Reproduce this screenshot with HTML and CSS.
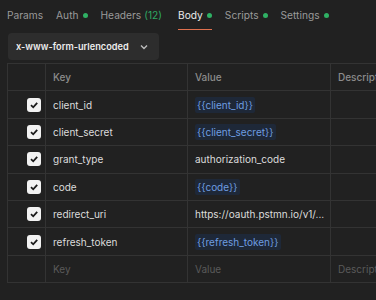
FILE: index.html
```html
<!DOCTYPE html>
<html lang="en">
<head>
  <meta charset="UTF-8">
  <meta name="viewport" content="width=device-width, initial-scale=1.0">
  <title>Body</title>
  <link rel="stylesheet" href="styles.css">
</head>
<body>
  <div class="tabs">
    <div class="tab">Params</div>
    <div class="tab">Auth <span class="dot"></span></div>
    <div class="tab">Headers <span class="count">(12)</span></div>
    <div class="tab active">Body <span class="dot"></span></div>
    <div class="tab">Scripts <span class="dot"></span></div>
    <div class="tab">Settings <span class="dot"></span></div>
  </div>

  <div class="body-type">
    <div class="select">
      x-www-form-urlencoded
      <svg width="10" height="10" viewBox="0 0 10 10"><path d="M2 3.5 L5 6.5 L8 3.5" fill="none" stroke="#bdbdbd" stroke-width="1.4"/></svg>
    </div>
  </div>

  <div class="params">
    <div class="row head">
      <div class="cell check"></div>
      <div class="cell key">Key</div>
      <div class="cell value">Value</div>
      <div class="cell desc">Descript</div>
    </div>
    <div class="row">
      <div class="cell check"><span class="box"><svg width="10" height="10" viewBox="0 0 10 10"><path d="M2 5.2 L4.2 7.3 L8.2 2.8" fill="none" stroke="#1a1a1a" stroke-width="1.8"/></svg></span></div>
      <div class="cell key">client_id</div>
      <div class="cell value"><span class="var">{{client_id}}</span></div>
      <div class="cell desc"></div>
    </div>
    <div class="row">
      <div class="cell check"><span class="box"><svg width="10" height="10" viewBox="0 0 10 10"><path d="M2 5.2 L4.2 7.3 L8.2 2.8" fill="none" stroke="#1a1a1a" stroke-width="1.8"/></svg></span></div>
      <div class="cell key">client_secret</div>
      <div class="cell value"><span class="var">{{client_secret}}</span></div>
      <div class="cell desc"></div>
    </div>
    <div class="row">
      <div class="cell check"><span class="box"><svg width="10" height="10" viewBox="0 0 10 10"><path d="M2 5.2 L4.2 7.3 L8.2 2.8" fill="none" stroke="#1a1a1a" stroke-width="1.8"/></svg></span></div>
      <div class="cell key">grant_type</div>
      <div class="cell value">authorization_code</div>
      <div class="cell desc"></div>
    </div>
    <div class="row">
      <div class="cell check"><span class="box"><svg width="10" height="10" viewBox="0 0 10 10"><path d="M2 5.2 L4.2 7.3 L8.2 2.8" fill="none" stroke="#1a1a1a" stroke-width="1.8"/></svg></span></div>
      <div class="cell key">code</div>
      <div class="cell value"><span class="var">{{code}}</span></div>
      <div class="cell desc"></div>
    </div>
    <div class="row">
      <div class="cell check"><span class="box"><svg width="10" height="10" viewBox="0 0 10 10"><path d="M2 5.2 L4.2 7.3 L8.2 2.8" fill="none" stroke="#1a1a1a" stroke-width="1.8"/></svg></span></div>
      <div class="cell key">redirect_uri</div>
      <div class="cell value">https://oauth.pstmn.io/v1/...</div>
      <div class="cell desc"></div>
    </div>
    <div class="row">
      <div class="cell check"><span class="box"><svg width="10" height="10" viewBox="0 0 10 10"><path d="M2 5.2 L4.2 7.3 L8.2 2.8" fill="none" stroke="#1a1a1a" stroke-width="1.8"/></svg></span></div>
      <div class="cell key">refresh_token</div>
      <div class="cell value"><span class="var">{{refresh_token}}</span></div>
      <div class="cell desc"></div>
    </div>
    <div class="row empty">
      <div class="cell check"></div>
      <div class="cell key">Key</div>
      <div class="cell value">Value</div>
      <div class="cell desc">Descript</div>
    </div>
  </div>
</body>
</html>
```

FILE: styles.css
```css
body {
  font-family: 'Inter', 'Noto Sans', sans-serif;
  background-color: #212121;
  color: #dcdcdc;
  margin: 0;
  padding: 0;
  width: 376px;
  height: 300px;
  overflow: hidden;
  font-size: 10px;
}

.tabs {
  display: flex;
  gap: 12px;
  padding: 0 0 0 7px;
  height: 30px;
}

.tab {
  display: flex;
  align-items: center;
  gap: 3px;
  color: #9a9a9a;
  font-size: 10.2px;
  border-bottom: 1px solid transparent;
  padding-top: 1px;
  margin-right: 1px;
}

.tab.active {
  color: #ececec;
  border-bottom-color: #e0714f;
  margin-left: 3px;
}

.count {
  color: #2fa862;
}

.dot {
  width: 5px;
  height: 5px;
  border-radius: 50%;
  background-color: #2fb164;
  margin-left: 1px;
}

.body-type {
  padding: 3px 8px 3px 8px;
}

.select {
  display: inline-flex;
  align-items: center;
  gap: 10px;
  height: 27px;
  padding: 0 10px 0 8px;
  background-color: #2d2d2d;
  border-radius: 4px;
  color: #ececec;
  font-size: 9.2px;
  font-weight: 600;
}

.params {
  margin-left: 7px;
  border-top: 1px solid #333333;
  border-left: 1px solid #333333;
}

.row {
  display: flex;
  height: 27.4px;
  border-bottom: 1px solid #333333;
  box-sizing: border-box;
}

.cell {
  display: flex;
  align-items: center;
  border-right: 1px solid #333333;
  padding-left: 7px;
  white-space: nowrap;
  overflow: hidden;
  flex-shrink: 0;
}

.check {
  width: 38px;
  box-sizing: border-box;
  justify-content: flex-end;
  padding: 0 4px 0 0;
}

.key {
  width: 142px;
  box-sizing: border-box;
}

.value {
  width: 143px;
  box-sizing: border-box;
}

.desc {
  width: 46px;
  box-sizing: border-box;
  border-right: none;
}

.head .cell {
  color: #8c8c8c;
  font-weight: 500;
}

.empty .cell {
  color: #5a5a5a;
}

.box {
  width: 14px;
  height: 14px;
  border-radius: 3px;
  background-color: #f2f2f2;
  display: flex;
  align-items: center;
  justify-content: center;
}

.var {
  background-color: #1e2838;
  color: #6e9de0;
  padding: 2px 2px;
  border-radius: 2px;
}
```
